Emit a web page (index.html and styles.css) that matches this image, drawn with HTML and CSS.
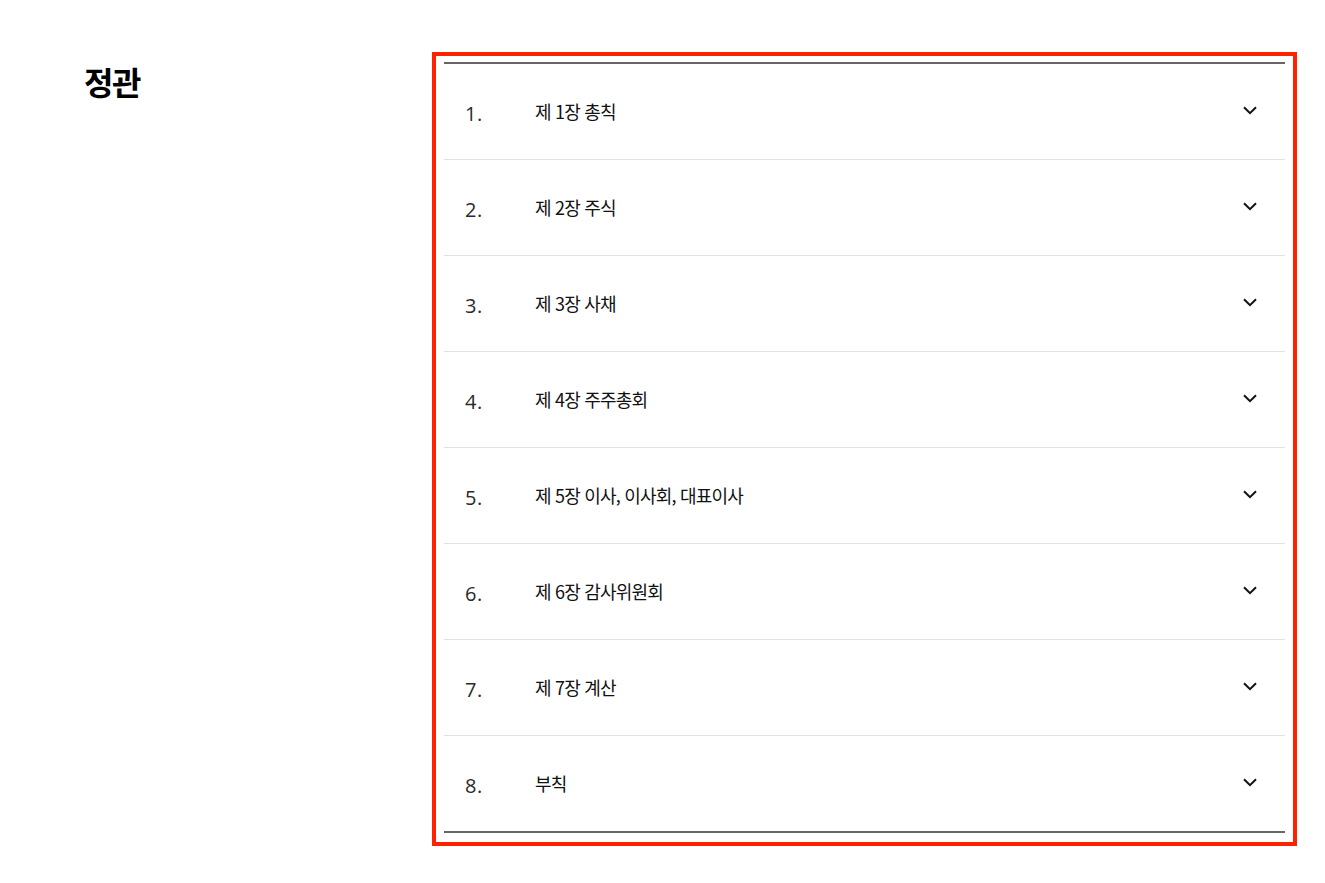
FILE: index.html
```html
<!DOCTYPE html>
<html lang="ko">
<head>
<meta charset="utf-8">
<link rel="stylesheet" href="styles.css">
</head>
<body>
<div class="page">
  <h2 class="title">정관</h2>
  <div class="box">
    <ul class="list">
      <li class="row"><span class="num">1.</span><span class="label">제 1장 총칙</span><svg class="chev" width="14" height="9" viewBox="0 0 14 9"><path d="M1 1.2l6 6 6-6" fill="none" stroke="#111" stroke-width="2"/></svg></li>
      <li class="row"><span class="num">2.</span><span class="label">제 2장 주식</span><svg class="chev" width="14" height="9" viewBox="0 0 14 9"><path d="M1 1.2l6 6 6-6" fill="none" stroke="#111" stroke-width="2"/></svg></li>
      <li class="row"><span class="num">3.</span><span class="label">제 3장 사채</span><svg class="chev" width="14" height="9" viewBox="0 0 14 9"><path d="M1 1.2l6 6 6-6" fill="none" stroke="#111" stroke-width="2"/></svg></li>
      <li class="row"><span class="num">4.</span><span class="label">제 4장 주주총회</span><svg class="chev" width="14" height="9" viewBox="0 0 14 9"><path d="M1 1.2l6 6 6-6" fill="none" stroke="#111" stroke-width="2"/></svg></li>
      <li class="row"><span class="num">5.</span><span class="label">제 5장 이사, 이사회, 대표이사</span><svg class="chev" width="14" height="9" viewBox="0 0 14 9"><path d="M1 1.2l6 6 6-6" fill="none" stroke="#111" stroke-width="2"/></svg></li>
      <li class="row"><span class="num">6.</span><span class="label">제 6장 감사위원회</span><svg class="chev" width="14" height="9" viewBox="0 0 14 9"><path d="M1 1.2l6 6 6-6" fill="none" stroke="#111" stroke-width="2"/></svg></li>
      <li class="row"><span class="num">7.</span><span class="label">제 7장 계산</span><svg class="chev" width="14" height="9" viewBox="0 0 14 9"><path d="M1 1.2l6 6 6-6" fill="none" stroke="#111" stroke-width="2"/></svg></li>
      <li class="row"><span class="num">8.</span><span class="label">부칙</span><svg class="chev" width="14" height="9" viewBox="0 0 14 9"><path d="M1 1.2l6 6 6-6" fill="none" stroke="#111" stroke-width="2"/></svg></li>
    </ul>
  </div>
</div>
</body>
</html>
```

FILE: styles.css
```css
* { box-sizing: border-box; }
html, body { margin: 0; padding: 0; background: #fff; }
body {
  font-family: "Noto Sans CJK KR", "Noto Sans", sans-serif;
  color: #111;
}
.page {
  display: flex;
  align-items: flex-start;
  padding: 52px 28px 0 84px;
}
.title {
  margin: 0;
  width: 348px;
  flex: none;
  font-size: 32px;
  font-weight: 700;
  letter-spacing: -1.5px;
  line-height: 1;
  padding-top: 13px;
  color: #000;
}
.box {
  width: 865px;
  border: 4px solid #ff2200;
  padding: 6px 8px 9px 8px;
}
.list {
  list-style: none;
  margin: 0;
  padding: 0;
  border-top: 2px solid #666;
  border-bottom: 2px solid #666;
}
.row {
  display: flex;
  align-items: center;
  height: 96px;
  border-bottom: 1px solid #e2e2e2;
  padding: 0 28px 0 21px;
}
.row:last-child { border-bottom: none; height: 95px; }
.num {
  width: 70px;
  font-family: "Open Sans", sans-serif;
  font-size: 20px;
  color: #2a2a2a;
  padding-top: 3px;
  letter-spacing: 0.5px;
}
.label {
  flex: 1;
  font-size: 18px;
  letter-spacing: -0.8px;
  color: #111;
  padding-bottom: 1px;
}
.chev { flex: none; margin-bottom: 2px; }
```
